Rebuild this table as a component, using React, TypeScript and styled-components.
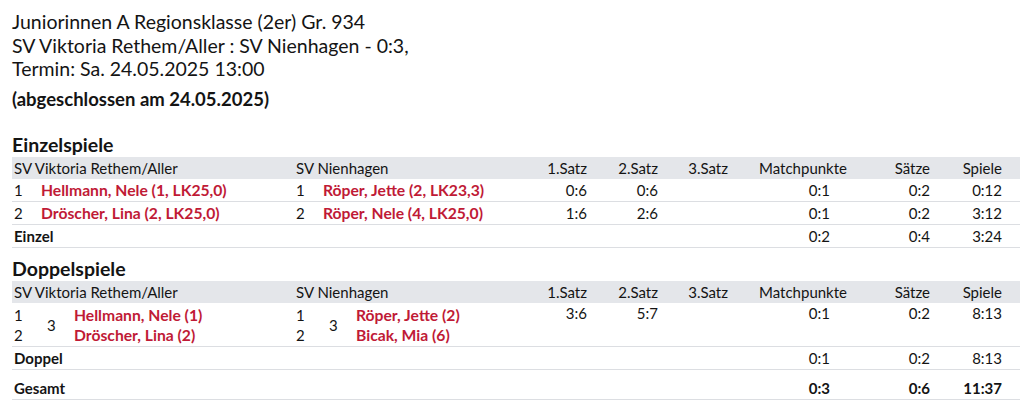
import React from "react";
import styled, { createGlobalStyle } from "styled-components";

const Global = createGlobalStyle`
  html, body { margin: 0; padding: 0; background: #fff; }
  body {
    font-family: Lato, "Liberation Sans", sans-serif;
    color: #141414;
  }
`;

const Page = styled.div`
  padding: 10px 4px 0 12px;
`;

const TitleLine = styled.div`
  font-size: 19.5px;
  line-height: 23.5px;
`;

const Status = styled.div`
  font-size: 18.5px;
  font-weight: 700;
  line-height: 24px;
  margin-top: 6px;
`;

const SectionTitle = styled.h2<{ $first?: boolean }>`
  margin: ${(p) => (p.$first ? "23px" : "10px")} 0 0 0;
  font-size: 19.5px;
  font-weight: 700;
  line-height: 22px;
  height: 22px;
`;

const COLS = "280px 228px 70px 70px 70px 120px 82px 88px";

const HeadRow = styled.div`
  display: grid;
  grid-template-columns: ${COLS};
  background: #e4e6ea;
  height: 22px;
  align-items: center;
  font-size: 15px;
  margin-top: 1px;
`;

const Row = styled.div<{ $tall?: boolean; $gap?: boolean }>`
  display: grid;
  grid-template-columns: ${COLS};
  align-items: ${(p) => (p.$tall ? "start" : "center")};
  height: ${(p) => (p.$tall ? "43px" : "22px")};
  border-bottom: 1px solid #dcdee2;
  font-size: 15px;
  margin-top: ${(p) => (p.$gap ? "7px" : "0")};
`;

const Cell = styled.div<{ $right?: boolean; $pr?: number; $pl?: number; $bold?: boolean }>`
  text-align: ${(p) => (p.$right ? "right" : "left")};
  padding-right: ${(p) => p.$pr ?? 0}px;
  padding-left: ${(p) => p.$pl ?? 0}px;
  font-weight: ${(p) => (p.$bold ? 700 : 400)};
  white-space: nowrap;
  line-height: 20px;
`;

const Player = styled.div<{ $pl: number }>`
  display: flex;
  padding-left: ${(p) => p.$pl}px;
  line-height: 20px;
`;

const Num = styled.span`
  width: 27px;
  flex: none;
`;

const Name = styled.span`
  color: #c01a36;
  font-weight: 700;
  font-size: 15.7px;
`;

const Pair = styled.div<{ $pl: number }>`
  display: grid;
  grid-template-columns: 33px 27px auto;
  grid-template-rows: 20px 20px;
  padding-left: ${(p) => p.$pl}px;
  padding-top: 2px;
  line-height: 20px;
`;

const PairCount = styled.span`
  grid-row: 1 / span 2;
  grid-column: 2;
  align-self: center;
`;

const PairName = styled(Name)<{ $row: number }>`
  grid-column: 3;
  grid-row: ${(p) => p.$row};
`;

const PairNum = styled.span<{ $row: number }>`
  grid-column: 1;
  grid-row: ${(p) => p.$row};
`;

const team1 = "SV Viktoria Rethem/Aller";
const team2 = "SV Nienhagen";

const pads = { s1: 3, s2: 2, s3: 2, mp: 3, mpv: 20, sa: 2, sp: 18 };

function Header() {
  return (
    <HeadRow>
      <Cell $pl={2}>{team1}</Cell>
      <Cell $pl={4}>{team2}</Cell>
      <Cell $right $pr={pads.s1}>1.Satz</Cell>
      <Cell $right $pr={pads.s2}>2.Satz</Cell>
      <Cell $right $pr={pads.s3}>3.Satz</Cell>
      <Cell $right $pr={pads.mp}>Matchpunkte</Cell>
      <Cell $right $pr={pads.sa}>Sätze</Cell>
      <Cell $right $pr={pads.sp}>Spiele</Cell>
    </HeadRow>
  );
}

type Scores = { s1: string; s2: string; s3: string; mp: string; sa: string; sp: string };

function ScoreCells({ s, bold }: { s: Scores; bold?: boolean }) {
  return (
    <>
      <Cell $right $pr={pads.s1}>{s.s1}</Cell>
      <Cell $right $pr={pads.s2}>{s.s2}</Cell>
      <Cell $right $pr={pads.s3}>{s.s3}</Cell>
      <Cell $right $pr={pads.mpv} $bold={bold}>{s.mp}</Cell>
      <Cell $right $pr={pads.sa} $bold={bold}>{s.sa}</Cell>
      <Cell $right $pr={pads.sp} $bold={bold}>{s.sp}</Cell>
    </>
  );
}

const singles = [
  { n: "1", a: "Hellmann, Nele (1, LK25,0)", b: "Röper, Jette (2, LK23,3)", s: { s1: "0:6", s2: "0:6", s3: "", mp: "0:1", sa: "0:2", sp: "0:12" } },
  { n: "2", a: "Dröscher, Lina (2, LK25,0)", b: "Röper, Nele (4, LK25,0)", s: { s1: "1:6", s2: "2:6", s3: "", mp: "0:1", sa: "0:2", sp: "3:12" } },
];

function SumRow({ label, s, bold, gap }: { label: string; s: Scores; bold?: boolean; gap?: boolean }) {
  return (
    <Row $gap={gap}>
      <Cell $pl={2} $bold>{label}</Cell>
      <Cell />
      <ScoreCells s={s} bold={bold} />
    </Row>
  );
}

export default function App() {
  return (
    <Page>
      <Global />
      <TitleLine>Juniorinnen A Regionsklasse (2er) Gr. 934</TitleLine>
      <TitleLine>SV Viktoria Rethem/Aller : SV Nienhagen - 0:3,</TitleLine>
      <TitleLine>Termin: Sa. 24.05.2025 13:00</TitleLine>
      <Status>(abgeschlossen am 24.05.2025)</Status>

      <SectionTitle $first>Einzelspiele</SectionTitle>
      <Header />
      {singles.map((r) => (
        <Row key={r.n}>
          <Player $pl={2}>
            <Num>{r.n}</Num>
            <Name>{r.a}</Name>
          </Player>
          <Player $pl={4}>
            <Num>{r.n}</Num>
            <Name>{r.b}</Name>
          </Player>
          <ScoreCells s={r.s} />
        </Row>
      ))}
      <SumRow label="Einzel" s={{ s1: "", s2: "", s3: "", mp: "0:2", sa: "0:4", sp: "3:24" }} />

      <SectionTitle>Doppelspiele</SectionTitle>
      <Header />
      <Row $tall>
        <Pair $pl={2}>
          <PairNum $row={1}>1</PairNum>
          <PairNum $row={2}>2</PairNum>
          <PairCount>3</PairCount>
          <PairName $row={1}>Hellmann, Nele (1)</PairName>
          <PairName $row={2}>Dröscher, Lina (2)</PairName>
        </Pair>
        <Pair $pl={4}>
          <PairNum $row={1}>1</PairNum>
          <PairNum $row={2}>2</PairNum>
          <PairCount>3</PairCount>
          <PairName $row={1}>Röper, Jette (2)</PairName>
          <PairName $row={2}>Bicak, Mia (6)</PairName>
        </Pair>
        <ScoreCells s={{ s1: "3:6", s2: "5:7", s3: "", mp: "0:1", sa: "0:2", sp: "8:13" }} />
      </Row>
      <SumRow label="Doppel" s={{ s1: "", s2: "", s3: "", mp: "0:1", sa: "0:2", sp: "8:13" }} />
      <SumRow gap bold label="Gesamt" s={{ s1: "", s2: "", s3: "", mp: "0:3", sa: "0:6", sp: "11:37" }} />
    </Page>
  );
}
